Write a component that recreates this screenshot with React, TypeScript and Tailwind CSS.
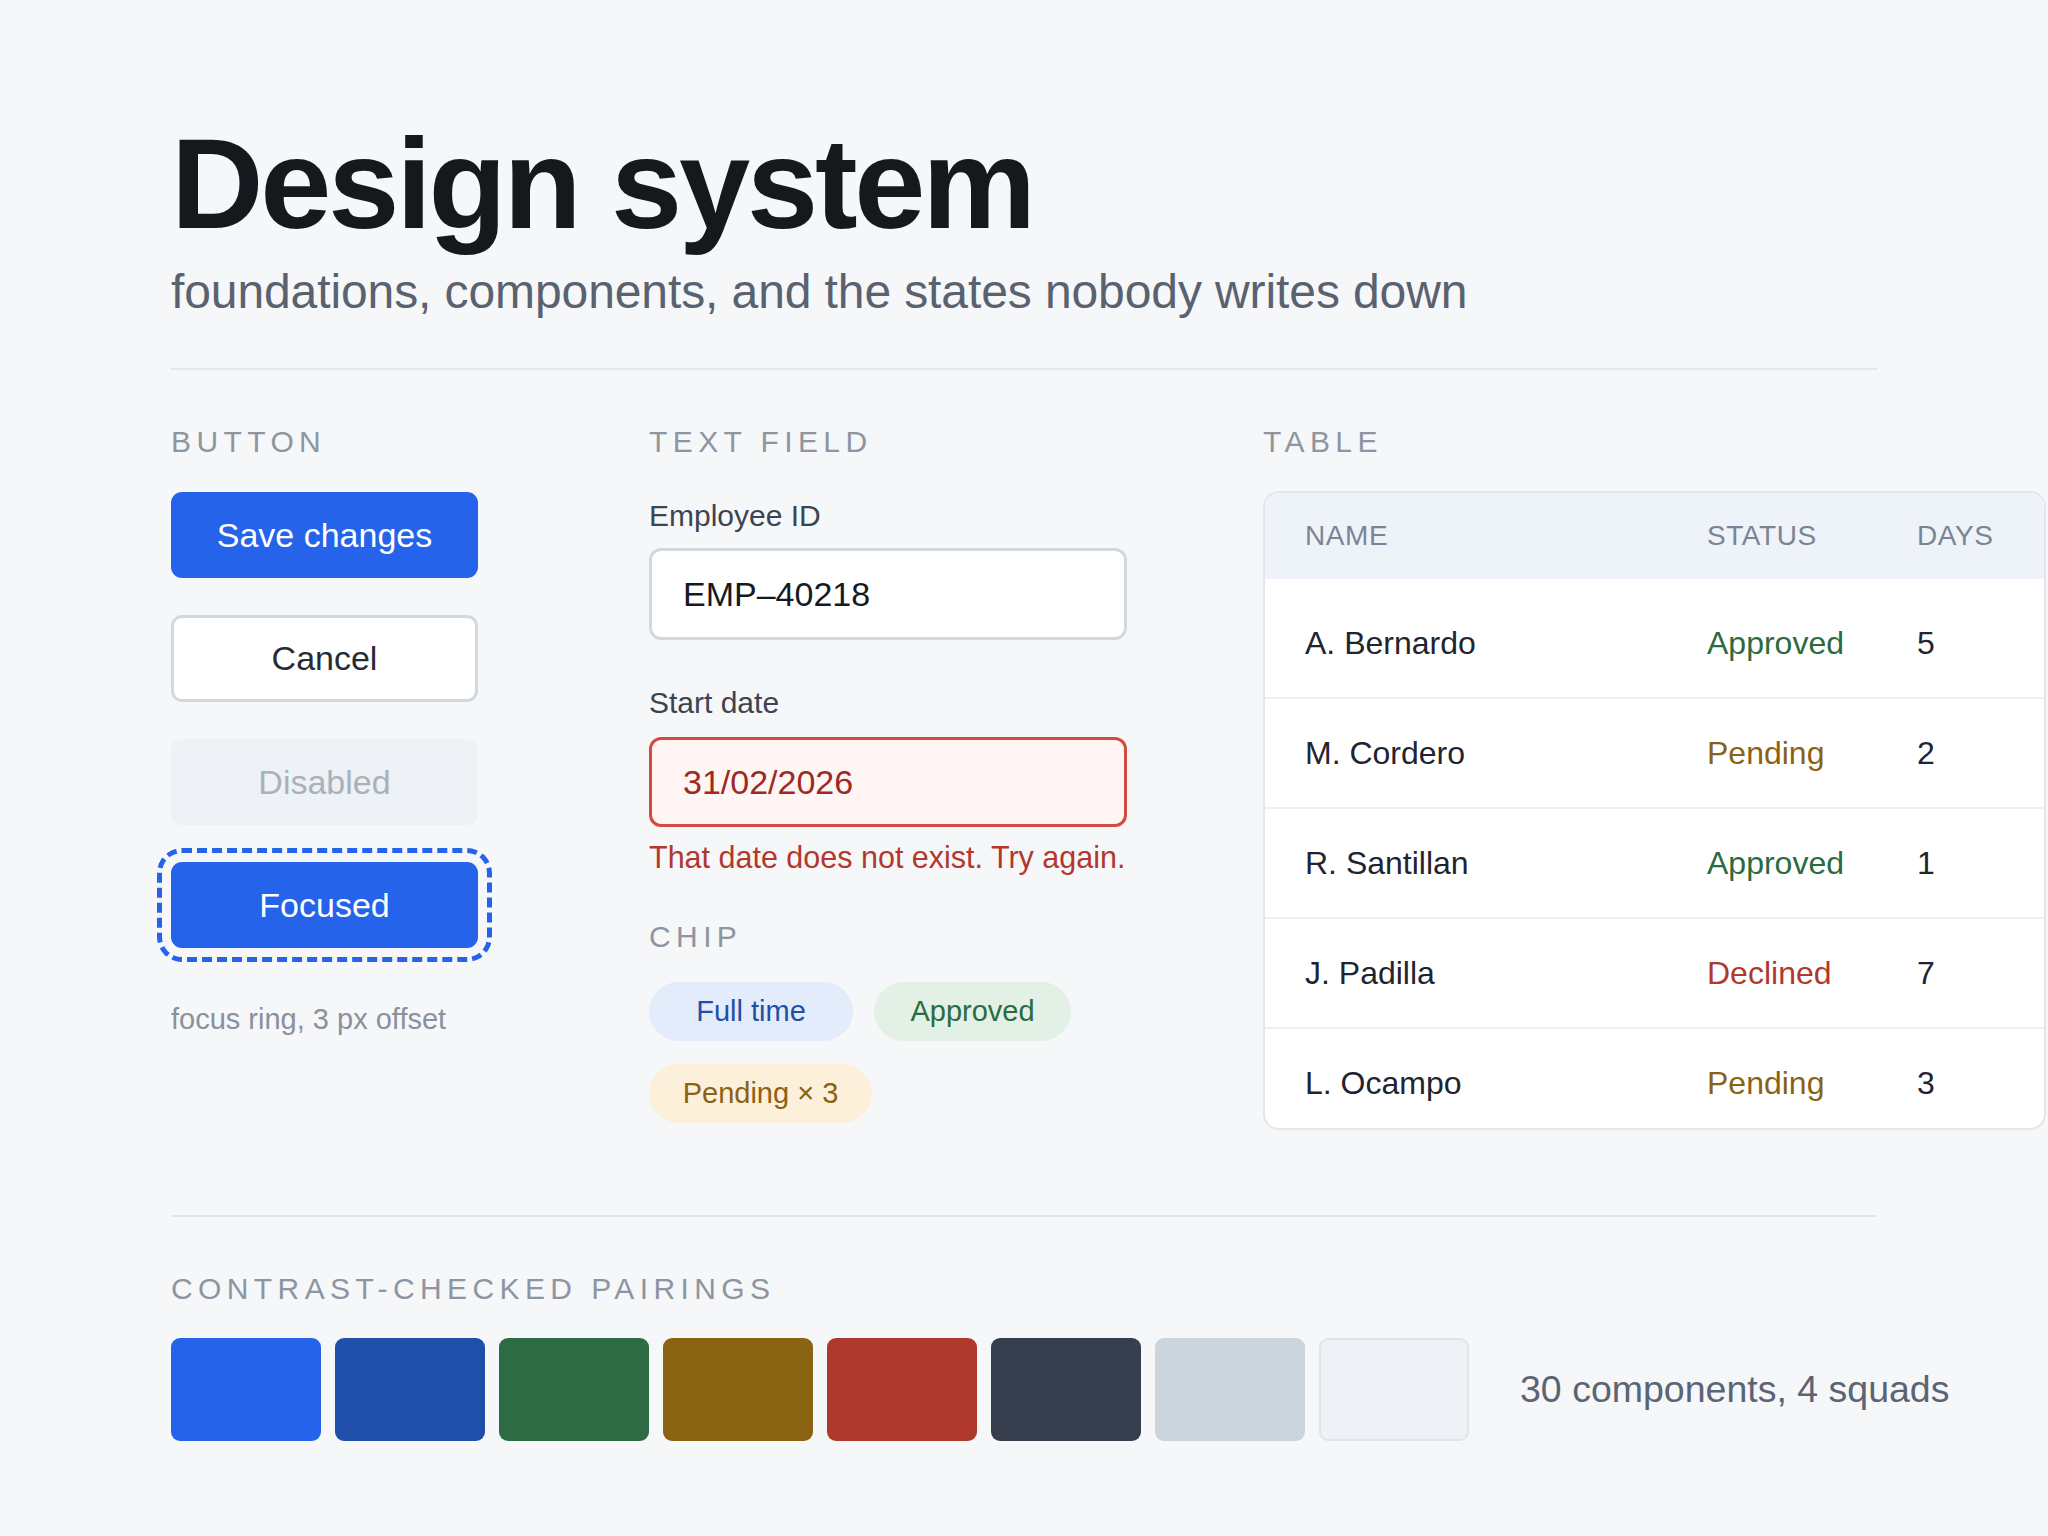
import React from "react";

const rows = [
  { name: "A. Bernardo", status: "Approved", days: 5 },
  { name: "M. Cordero", status: "Pending", days: 2 },
  { name: "R. Santillan", status: "Approved", days: 1 },
  { name: "J. Padilla", status: "Declined", days: 7 },
  { name: "L. Ocampo", status: "Pending", days: 3 },
];

const statusColor: Record<string, string> = {
  Approved: "text-[#2b6b3f]",
  Pending: "text-[#8a6212]",
  Declined: "text-[#b0392e]",
};

const swatches = [
  "bg-[#2563eb]",
  "bg-[#1f4fa8]",
  "bg-[#2c6b43]",
  "bg-[#8a6413]",
  "bg-[#b0392e]",
  "bg-[#373f4f]",
  "bg-[#cbd5de]",
  "bg-[#eef2f7] border-2 border-[#e1e5ea]",
];

function Label({ children }: { children: React.ReactNode }) {
  return (
    <p className="text-[30px] leading-[36px] tracking-[0.18em] text-[#8d95a1] uppercase">
      {children}
    </p>
  );
}

function App() {
  return (
    <main className="min-h-screen bg-[#f6f7f9] px-[171px] pt-[120px] pb-[96px] font-['Liberation_Sans',Arial,sans-serif]">
      <h1 className="text-[128px] leading-none font-bold tracking-[-0.025em] text-[#15181d]">
        Design system
      </h1>
      <p className="mt-[16px] text-[48px] leading-[56px] tracking-[-0.1px] text-[#5a6270]">
        foundations, components, and the states nobody writes down
      </p>

      <div className="mt-[48px] h-[2px] bg-[#e3e6ea]" />

      <section className="mt-[54px] grid grid-cols-[478px_614px_783px]">
        {/* buttons */}
        <div>
          <Label>Button</Label>
          <div className="mt-[32px] flex flex-col gap-[37px] w-[307px]">
            <button className="h-[86px] rounded-[11px] bg-[#2563eb] text-white text-[34px]">
              Save changes
            </button>
            <button className="h-[87px] rounded-[11px] bg-white border-[3px] border-[#d2d8df] text-[#262c36] text-[34px]">
              Cancel
            </button>
            <button className="h-[86px] rounded-[11px] bg-[#eef1f5] text-[#a9b1bc] text-[34px]">
              Disabled
            </button>
            <button className="h-[86px] rounded-[11px] bg-[#2563eb] text-white text-[34px] outline-[5px] outline-dashed outline-[#2563eb] outline-offset-[9px]">
              Focused
            </button>
          </div>
          <p className="mt-[54px] text-[29px] leading-[34px] text-[#8a919c]">
            focus ring, 3 px offset
          </p>
        </div>

        {/* text fields + chips */}
        <div className="w-[478px]">
          <Label>Text field</Label>
          <p className="mt-[38px] text-[30px] leading-[36px] text-[#3d4451]">Employee ID</p>
          <div className="mt-[14px] h-[92px] rounded-[12px] border-[3px] border-[#d2d8df] bg-white pl-[31px] flex items-center text-[34px] text-[#16191f]">
            EMP–40218
          </div>
          <p className="mt-[45px] text-[30px] leading-[36px] text-[#3d4451]">Start date</p>
          <div className="mt-[16px] h-[90px] rounded-[12px] border-[3px] border-[#d24b3d] bg-[#fff5f4] pl-[31px] flex items-center text-[34px] text-[#9b2a22]">
            31/02/2026
          </div>
          <p className="mt-[12px] text-[30.5px] leading-[36px] text-[#b3372d]">
            That date does not exist. Try again.
          </p>

          <div className="mt-[44px]">
            <Label>Chip</Label>
          </div>
          <div className="mt-[27px] flex flex-wrap gap-x-[21px] gap-y-[23px]">
            <span className="h-[59px] w-[204px] rounded-full bg-[#e2ecfb] text-[#1f4fa8] text-[29px] flex items-center justify-center">
              Full time
            </span>
            <span className="h-[59px] w-[197px] rounded-full bg-[#e3f0e6] text-[#2b6b3f] text-[29px] flex items-center justify-center">
              Approved
            </span>
            <span className="h-[59px] w-[223px] rounded-full bg-[#fdf0da] text-[#8a6212] text-[29px] flex items-center justify-center">
              Pending × 3
            </span>
          </div>
        </div>

        {/* table */}
        <div>
          <Label>Table</Label>
          <div className="mt-[31px] w-[783px] rounded-[16px] border-2 border-[#e3e6ea] bg-white overflow-hidden">
            <div className="h-[86px] bg-[#eef3fa] grid grid-cols-[402px_210px_1fr] items-center text-[28px] tracking-[0.02em] text-[#7b8494]">
              <span className="pl-[40px]">NAME</span>
              <span className="pl-[40px]">STATUS</span>
              <span className="pl-[40px]">DAYS</span>
            </div>
            {rows.map((r, i) => {
              const first = i === 0;
              const last = i === rows.length - 1;
              return (
                <div
                  key={r.name}
                  className={
                    "grid grid-cols-[402px_210px_1fr] items-center text-[32px] " +
                    (first
                      ? "h-[120px] pt-[10px] border-b-2 border-[#eef0f3]"
                      : last
                      ? "h-[99px] pt-[9px]"
                      : "h-[110px] border-b-2 border-[#eef0f3]")
                  }
                >
                  <span className="pl-[40px] text-[#1f2530]">{r.name}</span>
                  <span className={"pl-[40px] " + statusColor[r.status]}>{r.status}</span>
                  <span className="pl-[40px] text-[#1f2530]">{r.days}</span>
                </div>
              );
            })}
          </div>
        </div>
      </section>

      <div className="mt-[85px] h-[2px] bg-[#e3e6ea]" />

      <section className="mt-[54px]">
        <Label>Contrast-checked pairings</Label>
        <div className="mt-[31px] flex items-center">
          <div className="flex shrink-0 gap-[14px]">
            {swatches.map((s, i) => (
              <div key={i} className={"h-[103px] w-[150px] rounded-[9px] " + s} />
            ))}
          </div>
          <p className="ml-[51px] shrink-0 whitespace-nowrap text-[37.5px] text-[#5b6472]">
            30 components, 4 squads
          </p>
        </div>
      </section>
    </main>
  );
}

export default App;
